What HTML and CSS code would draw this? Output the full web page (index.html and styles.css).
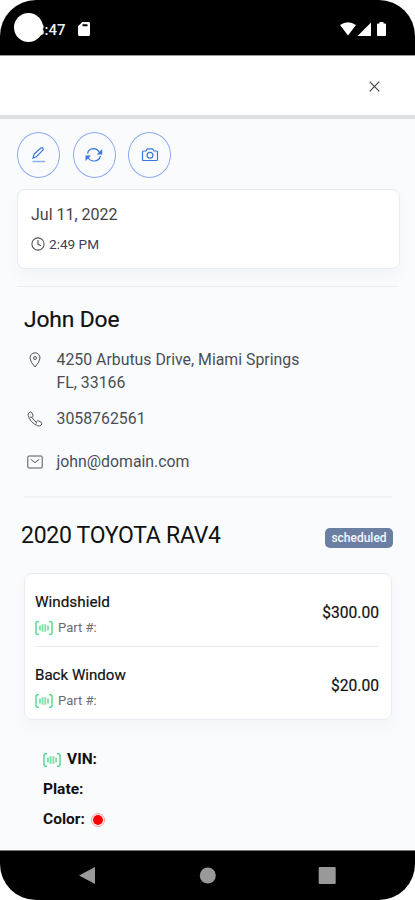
FILE: index.html
```html
<!DOCTYPE html>
<html lang="en">
<head>
<meta charset="utf-8">
<meta name="viewport" content="width=device-width, initial-scale=1">
<title>Work order</title>
<link rel="stylesheet" href="styles.css">
</head>
<body>
<svg width="0" height="0" class="defs" aria-hidden="true">
  <symbol id="scan" viewBox="0 0 18 14">
    <path d="M4 .8H2.200Q1 .8 1 2V12Q1 13.200 2.200 13.200H4M14 .8h1.800Q17 .8 17 2V12Q17 13.200 15.800 13.200H14" fill="none" stroke="currentColor" stroke-width="1.500"/>
    <path d="M5 4.500v5M7.600 3.200v7.600M10.300 3.200v7.600M13 4.500v5" fill="none" stroke="currentColor" stroke-width="1.800" opacity=".8"/>
  </symbol>
</svg>
<div class="phone">
  <div class="status">
    <div class="clock">8:47</div>
    <div class="camera"></div>
    <svg class="sd" viewBox="0 0 12 14"><path fill="#fff" fill-rule="evenodd" d="M4.300 0H10.500Q12 0 12 1.500V12.500Q12 14 10.500 14H1.500Q0 14 0 12.500V4.300ZM4.500 2.300v2h5v-2Z"/></svg>
    <svg class="signals" viewBox="0 0 48 16"><path fill="#fff" d="M0 4Q8 -1.500 16 4L8 14.500ZM17.500 15L31 1.500V15ZM37 3.500Q37 2.500 38 2.500H39.500V1H43.500V2.500H45Q46 2.500 46 3.500V14Q46 15 45 15H38Q37 15 37 14Z"/></svg>
  </div>
  <header class="top">
    <svg class="close" viewBox="0 0 11 11"><path d="M.7.7l9.600 9.600M10.300.7L.7 10.300" stroke="#444" stroke-width="1.200"/></svg>
  </header>
  <main class="content">
    <div class="actions">
      <div class="round"><svg viewBox="0 0 16 18"><path d="M3 8.300L9.500 2.200Q11 1 12 2.100Q12.900 3.200 11.700 4.400L5.300 10.700L2 12Z"/><path class="soft" d="M1.500 15.500H14"/></svg></div>
      <div class="round"><svg viewBox="0 0 18 18"><path d="M2.500 7.500Q3.500 3 8.500 2.700Q12.400 2.800 14.500 6.500M15.500 10Q14.200 14.700 9.200 15Q5 15 2.700 11.200"/><path class="solid" d="M17.200 3V8.500H11.700ZM.5 15V9.500H6Z"/></svg></div>
      <div class="round"><svg viewBox="0 0 18 18"><path d="M2.500 5H5L6.300 2.800H11.700L13 5H15.500Q16.500 5 16.500 6V13.500Q16.500 14.500 15.500 14.500H2.500Q1.500 14.500 1.500 13.500V6Q1.500 5 2.500 5Z"/><circle cx="9" cy="9.300" r="2.900"/></svg></div>
    </div>
    <section class="card date">
      <div class="day">Jul 11, 2022</div>
      <div class="time"><svg viewBox="0 0 14 14"><circle cx="7" cy="7" r="6.100"/><path d="M7 3v4.300l3 1.400"/></svg><span>2:49 PM</span></div>
    </section>
    <hr class="rule">
    <section class="customer">
      <h1 class="name">John Doe</h1>
      <div class="contact address">
        <svg viewBox="0 0 16 16"><path d="M8 15Q3 9.500 3 6A5 5.200 0 0 1 13 6Q13 9.500 8 15Z"/><circle cx="8" cy="6" r="1.500"/></svg>
        <div><span class="line street">4250 Arbutus Drive, Miami Springs</span><span class="line region">FL, 33166</span></div>
      </div>
      <div class="contact phone-no">
        <svg viewBox="0 0 16 16"><path d="M1.800 1.800Q3.800 0 4.900 1.700L6 4Q6.300 5.200 4.900 6.300Q6.500 9.200 9.200 11Q10.300 9.500 11.700 9.900L14.200 11.200Q15.500 12.200 14.200 14Q12.700 15.600 10.700 14.800Q3.100 11.600 1.200 4.500Q.9 3 1.800 1.800Z M4.900 6.300L3 6M9.200 11L9.300 12.500"/></svg>
        <span class="line number">3058762561</span>
      </div>
      <div class="contact mail">
        <svg viewBox="0 0 16 16"><rect x=".8" y="2" width="14.400" height="12" rx="1"/><path d="M3.700 5.200L8 8.700L12.300 5.200"/></svg>
        <span class="line email">john@domain.com</span>
      </div>
    </section>
    <hr class="rule inner">
    <div class="vehicle">
      <h2>2020 TOYOTA RAV4</h2>
      <span class="badge">scheduled</span>
    </div>
    <section class="card parts">
      <div class="part">
        <div><div class="title windshield">Windshield</div><div class="sub"><svg><use href="#scan"/></svg><span>Part #:</span></div></div>
        <div class="price">$300.00</div>
      </div>
      <div class="part">
        <div><div class="title">Back Window</div><div class="sub"><svg><use href="#scan"/></svg><span>Part #:</span></div></div>
        <div class="price">$20.00</div>
      </div>
    </section>
    <div class="details">
      <div class="detail"><svg><use href="#scan"/></svg><span>VIN:</span></div>
      <div class="detail"><span>Plate:</span></div>
      <div class="detail"><span>Color:</span><i class="swatch"></i></div>
    </div>
  </main>
  <nav class="nav">
    <svg viewBox="0 0 415 49"><path d="M79 24.500L95 16V33Z"/><circle cx="207.800" cy="24.500" r="8"/><rect x="318.700" y="16" width="17" height="17" rx="1"/></svg>
  </nav>
</div>
</body>
</html>
```
FILE: styles.css
```css
* { box-sizing: border-box; }
body { margin: 0; background: #fff; font-family: Roboto, "Liberation Sans", sans-serif; color: #111; }
h1, h2, hr { margin: 0; border: 0; font-weight: 400; }
svg { display: block; flex: none; }
.defs { position: absolute; }
.phone { width: 415px; height: 900px; display: flex; flex-direction: column; overflow: hidden; }
.status { position: relative; height: 55px; flex: none; display: flex; align-items: flex-start; background: #000; border-radius: 36px 36px 0 0; color: #eee; padding-left: 36px; }
.clock { width: 30px; margin-top: 21px; font-size: 15px; line-height: 19px; font-weight: 500; white-space: nowrap; }
.camera { position: absolute; left: 14px; top: 13px; width: 29px; height: 29px; border-radius: 50%; background: #fff; }
.sd { width: 12px; height: 14px; margin: 22px 0 0 12px; }
.signals { width: 48px; height: 16px; margin: 21px 27px 0 auto; }
.top { height: 64px; flex: none; border-bottom: 4px solid #dddfe0; border-top: 1px solid #999; display: flex; justify-content: flex-end; padding: 25px 35px 0 0; }
.close { width: 11px; height: 11px; }
.content { height: 731px; flex: none; background: #f9fbfd; padding: 13px 16px 0 17px; }
.actions { display: flex; gap: 12.6px; height: 46px; }
.round { width: 43px; height: 46px; border: 1px solid #8eaaf0; border-radius: 50%; display: flex; align-items: center; justify-content: center; }
.round svg { width: 18px; height: 18px; margin-bottom: 1px; fill: none; stroke: #3c77df; stroke-width: 1.2; }
.round .solid { fill: #3c77df; stroke: none; }
.round .soft { stroke: #8eb0ee; stroke-width: 1.5; }
.card { background: #fff; border: 1px solid #e9edf1; border-radius: 8px; box-shadow: 0 8px 16px rgba(30, 50, 80, .03); }
.date { height: 80px; margin-top: 11px; margin-right: -1px; padding: 13px 13px 0; }
.day { font-size: 16px; line-height: 24px; color: #444; }
.time { display: flex; align-items: center; gap: 4px; margin-top: 7px; font-size: 13.6px; line-height: 20px; color: #3c4058; }
.time svg { width: 14px; height: 14px; margin-top: -1px; fill: none; stroke: #555; stroke-width: 1.1; }
.rule { height: 1px; margin-top: 17px; background: #e9ecf0; }
.customer { padding-left: 7px; }
.name { margin-top: 16px; font-size: 22.8px; line-height: 34px; letter-spacing: -.12px; white-space: nowrap; -webkit-text-stroke: .2px #111; }
.contact { display: flex; padding-left: 3px; gap: 13.5px; color: #4a4e55; font-size: 15.85px; line-height: 24px; }
.contact svg { width: 16px; height: 16px; margin-top: 4px; fill: none; stroke: #555; stroke-width: 1; }
.line { display: block; white-space: nowrap; }
.address { margin-top: 11px; }
.region { margin-top: -1px; }
.phone-no { margin-top: 12px; }
.mail { margin-top: 19px; }
.rule.inner { height: 2px; margin: 22px 7px 0; background: #f1f4f7; }
.vehicle { display: flex; justify-content: space-between; margin: 20px 6px 0 4px; height: 36px; }
.vehicle h2 { font-size: 23px; line-height: 36px; letter-spacing: -.27px; white-space: nowrap; }
.badge { width: 68px; height: 20px; margin-top: 10px; border-radius: 5px; background: #6b7fa2; color: #f4f7ff; font-size: 12px; font-weight: 500; line-height: 21px; text-align: center; }
.parts { height: 147px; margin: 19px 7px 0; padding: 0 12px 0 10px; }
.part { height: 72px; display: flex; justify-content: space-between; padding-top: 16px; }
.part + .part { border-top: 1px solid #e9ecef; }
.title { font-size: 15.1px; line-height: 24px; white-space: nowrap; -webkit-text-stroke: .2px #111; }
.windshield { font-size: 15.3px; }
.sub { display: flex; align-items: center; gap: 5px; margin-top: 3px; font-size: 13px; line-height: 22px; color: #686c74; }
.sub svg, .detail svg { width: 18px; height: 14px; color: #5bd990; }
.price { margin-top: 10px; font-size: 15.6px; line-height: 26px; -webkit-text-stroke: .2px #111; }
.details { padding: 24px 0 0 26px; }
.detail { display: flex; align-items: center; gap: 6px; height: 30px; font-size: 15.5px; font-weight: 700; }
.detail svg { margin-top: 1px; }
.swatch { width: 14px; height: 14px; margin-top: 1px; border-radius: 50%; background: #f00; background-clip: content-box; padding: 1px; border: 1px solid #ff9a9a; }
.nav { height: 50px; flex: none; background: #000; border-top: 1px solid #777; border-radius: 0 0 36px 36px; }
.nav svg { width: 415px; height: 49px; fill: #999; }
```
